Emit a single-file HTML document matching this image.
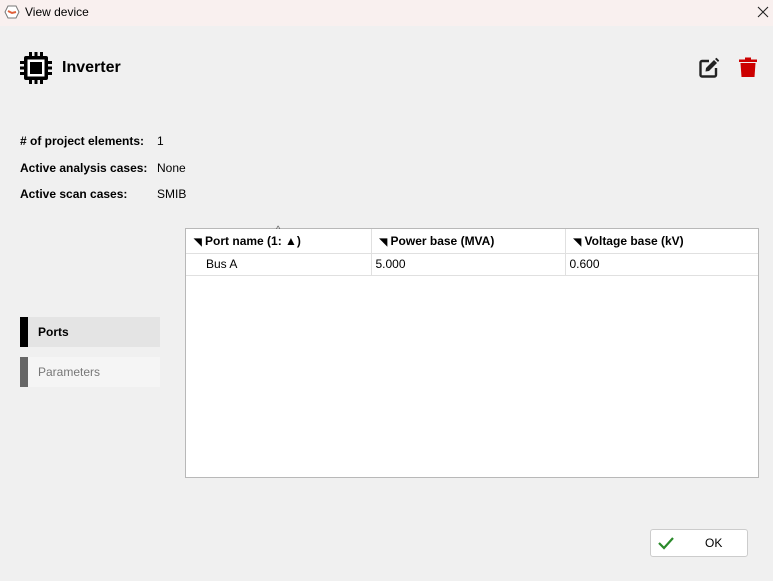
<!DOCTYPE html>
<html><head><style>
body{margin:0;width:773px;height:581px;background:#f0f0f0;font-family:"Liberation Sans",sans-serif;font-size:12px;color:#000;position:relative;overflow:hidden}
.a{position:absolute}
.title{left:0;top:0;width:773px;height:26px;background:#f9f0ef}
.lbl{font-weight:bold}
table{border-collapse:collapse;table-layout:fixed}
td{padding:0;white-space:nowrap;overflow:hidden}
</style></head><body>
<div class="a title">
<svg class="a" style="left:4px;top:4px" width="16" height="16" viewBox="0 0 16 16"><polygon points="4,2 12,2 15,8 12,14 4,14 1,8" fill="#fff" stroke="#777" stroke-width="1"/><path d="M4 7 L8 9 L12 8" stroke="#e0603a" stroke-width="2" fill="none"/></svg>
<div class="a" style="left:25px;top:5px;font-size:12px">View device</div>
<svg class="a" style="left:757px;top:6px" width="12" height="12" viewBox="0 0 12 12"><path d="M1 1 L11 11 M11 1 L1 11" stroke="#222" stroke-width="1.1"/></svg>
</div>
<svg class="a" style="left:19px;top:51px" width="34" height="34" viewBox="0 0 34 34">
<rect x="5" y="5" width="24" height="24" rx="2" fill="#000"/><rect x="8.5" y="8.5" width="17" height="17" fill="#fff"/><rect x="11" y="11" width="12" height="12" fill="#000"/>
<g fill="#000"><rect x="10" y="1" width="3" height="5"/><rect x="15.5" y="1" width="3" height="5"/><rect x="21" y="1" width="3" height="5"/>
<rect x="10" y="28" width="3" height="5"/><rect x="15.5" y="28" width="3" height="5"/><rect x="21" y="28" width="3" height="5"/>
<rect x="1" y="10" width="5" height="3"/><rect x="1" y="15.5" width="5" height="3"/><rect x="1" y="21" width="5" height="3"/>
<rect x="28" y="10" width="5" height="3"/><rect x="28" y="15.5" width="5" height="3"/><rect x="28" y="21" width="5" height="3"/></g></svg>
<div class="a lbl" style="left:62px;top:59px;font-size:16px">Inverter</div>
<svg class="a" style="left:698px;top:57px" width="22" height="22" viewBox="0 0 22 22"><path d="M11 4 H4 a1.5 1.5 0 0 0 -1.5 1.5 V18 a1.5 1.5 0 0 0 1.5 1.5 H16.5 A1.5 1.5 0 0 0 18 18 V11" fill="none" stroke="#222" stroke-width="2.4"/><path d="M8 11 L16 3 L19 6 L11 14 L7.5 14.5 Z" fill="#222"/><path d="M17 2 L18.5 0.8 L21.2 3.5 L20 5Z" fill="#222"/></svg>
<svg class="a" style="left:739px;top:57px" width="18" height="22" viewBox="0 0 18 22"><rect x="0" y="2.5" width="18" height="2.5" fill="#c00"/><rect x="6" y="0.5" width="6" height="3" fill="#c00"/><path d="M1.5 6 H16.5 L15.5 20 H2.5Z" fill="#c00"/></svg>
<div class="a lbl" style="left:20px;top:134px">#  of project elements:</div><div class="a" style="left:157px;top:134px">1</div>
<div class="a lbl" style="left:20px;top:161px">Active analysis cases:</div><div class="a" style="left:157px;top:161px">None</div>
<div class="a lbl" style="left:20px;top:187px">Active scan cases:</div><div class="a" style="left:157px;top:187px">SMIB</div>
<div class="a" style="left:20px;top:317px;width:140px;height:30px;background:#e4e4e4"><div class="a" style="left:0;top:0;width:8px;height:30px;background:#000"></div><div class="a lbl" style="left:18px;top:8px">Ports</div></div>
<div class="a" style="left:20px;top:357px;width:140px;height:30px;background:#f5f5f5"><div class="a" style="left:0;top:0;width:8px;height:30px;background:#666"></div><div class="a" style="left:18px;top:8px;color:#777">Parameters</div></div>
<div class="a" style="left:185px;top:228px;width:572px;height:248px;background:#fff;border:1px solid #b8b8b8">
<table style="width:572px">
<colgroup><col style="width:185px"><col style="width:194px"><col></colgroup>
<tr style="height:24px;border-bottom:1px solid #e0e0e0">
<td style="border-right:1px solid #e0e0e0;padding-left:8px" class="lbl"><span style="font-size:10px">◥</span> Port name (1: ▲)</td>
<td style="border-right:1px solid #e0e0e0;padding-left:8px" class="lbl"><span style="font-size:10px">◥</span> Power base (MVA)</td>
<td style="padding-left:8px" class="lbl"><span style="font-size:10px">◥</span> Voltage base (kV)</td></tr>
<tr style="height:22px;border-bottom:1px solid #e0e0e0">
<td style="border-right:1px solid #e0e0e0;padding-left:20px">Bus A</td>
<td style="border-right:1px solid #e0e0e0;padding-left:4px">5.000</td>
<td style="padding-left:4px">0.600</td></tr>
</table>
<div class="a" style="left:90px;top:-5px;font-size:9px;color:#555">^</div>
</div>
<div class="a" style="left:650px;top:529px;width:96px;height:26px;background:#fff;border:1px solid #ccc;border-radius:3px">
<svg class="a" style="left:7px;top:6px" width="16" height="14" viewBox="0 0 16 14"><path d="M1 7 L6 12 L15 2" stroke="#2a8a2a" stroke-width="2.2" fill="none"/></svg>
<div class="a" style="left:54px;top:6px">OK</div></div>
</body></html>
